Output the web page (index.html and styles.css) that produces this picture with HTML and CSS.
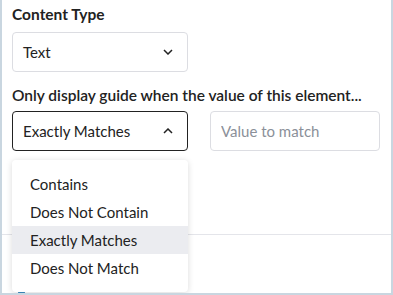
FILE: index.html
```html
<!DOCTYPE html>
<html lang="en">
<head>
    <meta charset="UTF-8">
    <meta name="viewport" content="width=device-width, initial-scale=1.0">
    <title>Guide display condition</title>
    <link rel="stylesheet" href="styles.css">
</head>
<body>
    <!-- Panel with a light frame -->
    <main class="panel">
        <!-- Content type field -->
        <section class="field">
            <label class="field_label">Content Type</label>
            <div class="select">
                <span>Text</span>
                <svg class="chev" width="10" height="6" viewBox="0 0 10 6"><path d="M1 1l4 4 4-4" fill="none" stroke="#222" stroke-width="1.5"/></svg>
            </div>
        </section>

        <!-- Condition field -->
        <section class="field cond">
            <label class="field_label">Only display guide when the value of this element...</label>
            <div class="cond_row">
                <div class="select open">
                    <span>Exactly Matches</span>
                    <svg class="chev" width="10" height="6" viewBox="0 0 10 6"><path d="M1 5l4-4 4 4" fill="none" stroke="#222" stroke-width="1.5"/></svg>
                </div>
                <input class="value_input" type="text" placeholder="Value to match">
            </div>
        </section>

        <hr class="divider">
        <span class="peek"></span>

        <!-- Open dropdown menu -->
        <ul class="menu">
            <li>Contains</li>
            <li>Does Not Contain</li>
            <li class="active">Exactly Matches</li>
            <li>Does Not Match</li>
        </ul>
    </main>
</body>
</html>
```

FILE: styles.css
```css
/* Page reset */
body {
    margin: 0;
    font-family: Lato, "Open Sans", sans-serif;
    color: #222;
    background: #fff;
}
/* Framed panel */
.panel {
    position: relative;
    box-sizing: border-box;
    width: 393px;
    height: 295px;
    border: 2px solid #c9d6e0;
    border-top: none;
    padding: 5px 10px 0 10px;
    overflow: hidden;
}
.field_label {
    display: block;
    font-size: 15.5px;
    line-height: 18px;
    font-weight: 700;
    margin-bottom: 9px;
}
/* Select boxes */
.select {
    box-sizing: border-box;
    width: 176px;
    height: 40px;
    border: 1px solid #dcdde2;
    border-radius: 4px;
    display: flex;
    align-items: center;
    justify-content: space-between;
    padding: 0 14px 0 10px;
    font-size: 15px;
}
.select.open {
    border-color: #222;
}
.cond {
    margin-top: 14px;
}
.cond .field_label {
    font-weight: 600;
    margin-bottom: 7px;
}
.cond_row {
    display: flex;
    gap: 22px;
}
/* Text input */
.value_input {
    box-sizing: border-box;
    width: 170px;
    height: 40px;
    border: 1px solid #dcdde2;
    border-radius: 4px;
    padding: 0 10px;
    font-family: inherit;
    font-size: 15px;
    color: #222;
}
.value_input::placeholder {
    color: #8b9099;
}
/* Separator line behind the menu */
.divider {
    margin: 83px -10px 0 -10px;
    border: none;
    height: 1px;
    background: #e4e5ea;
}
.peek {
    position: absolute;
    left: 16px;
    bottom: 0;
    width: 7px;
    height: 3px;
    border-radius: 4px 4px 0 0;
    background: #3e8fc4;
}
/* Dropdown menu */
.menu {
    position: absolute;
    left: 10px;
    top: 160px;
    width: 176px;
    margin: 0;
    padding: 10px 0;
    list-style: none;
    background: #fff;
    border-radius: 4px;
    box-shadow: 0 1px 6px rgba(0, 0, 0, 0.15);
}
.menu li {
    height: 28px;
    line-height: 28px;
    padding-left: 18px;
    font-size: 15px;
}
.menu li.active {
    background: #ebecf0;
}
```
